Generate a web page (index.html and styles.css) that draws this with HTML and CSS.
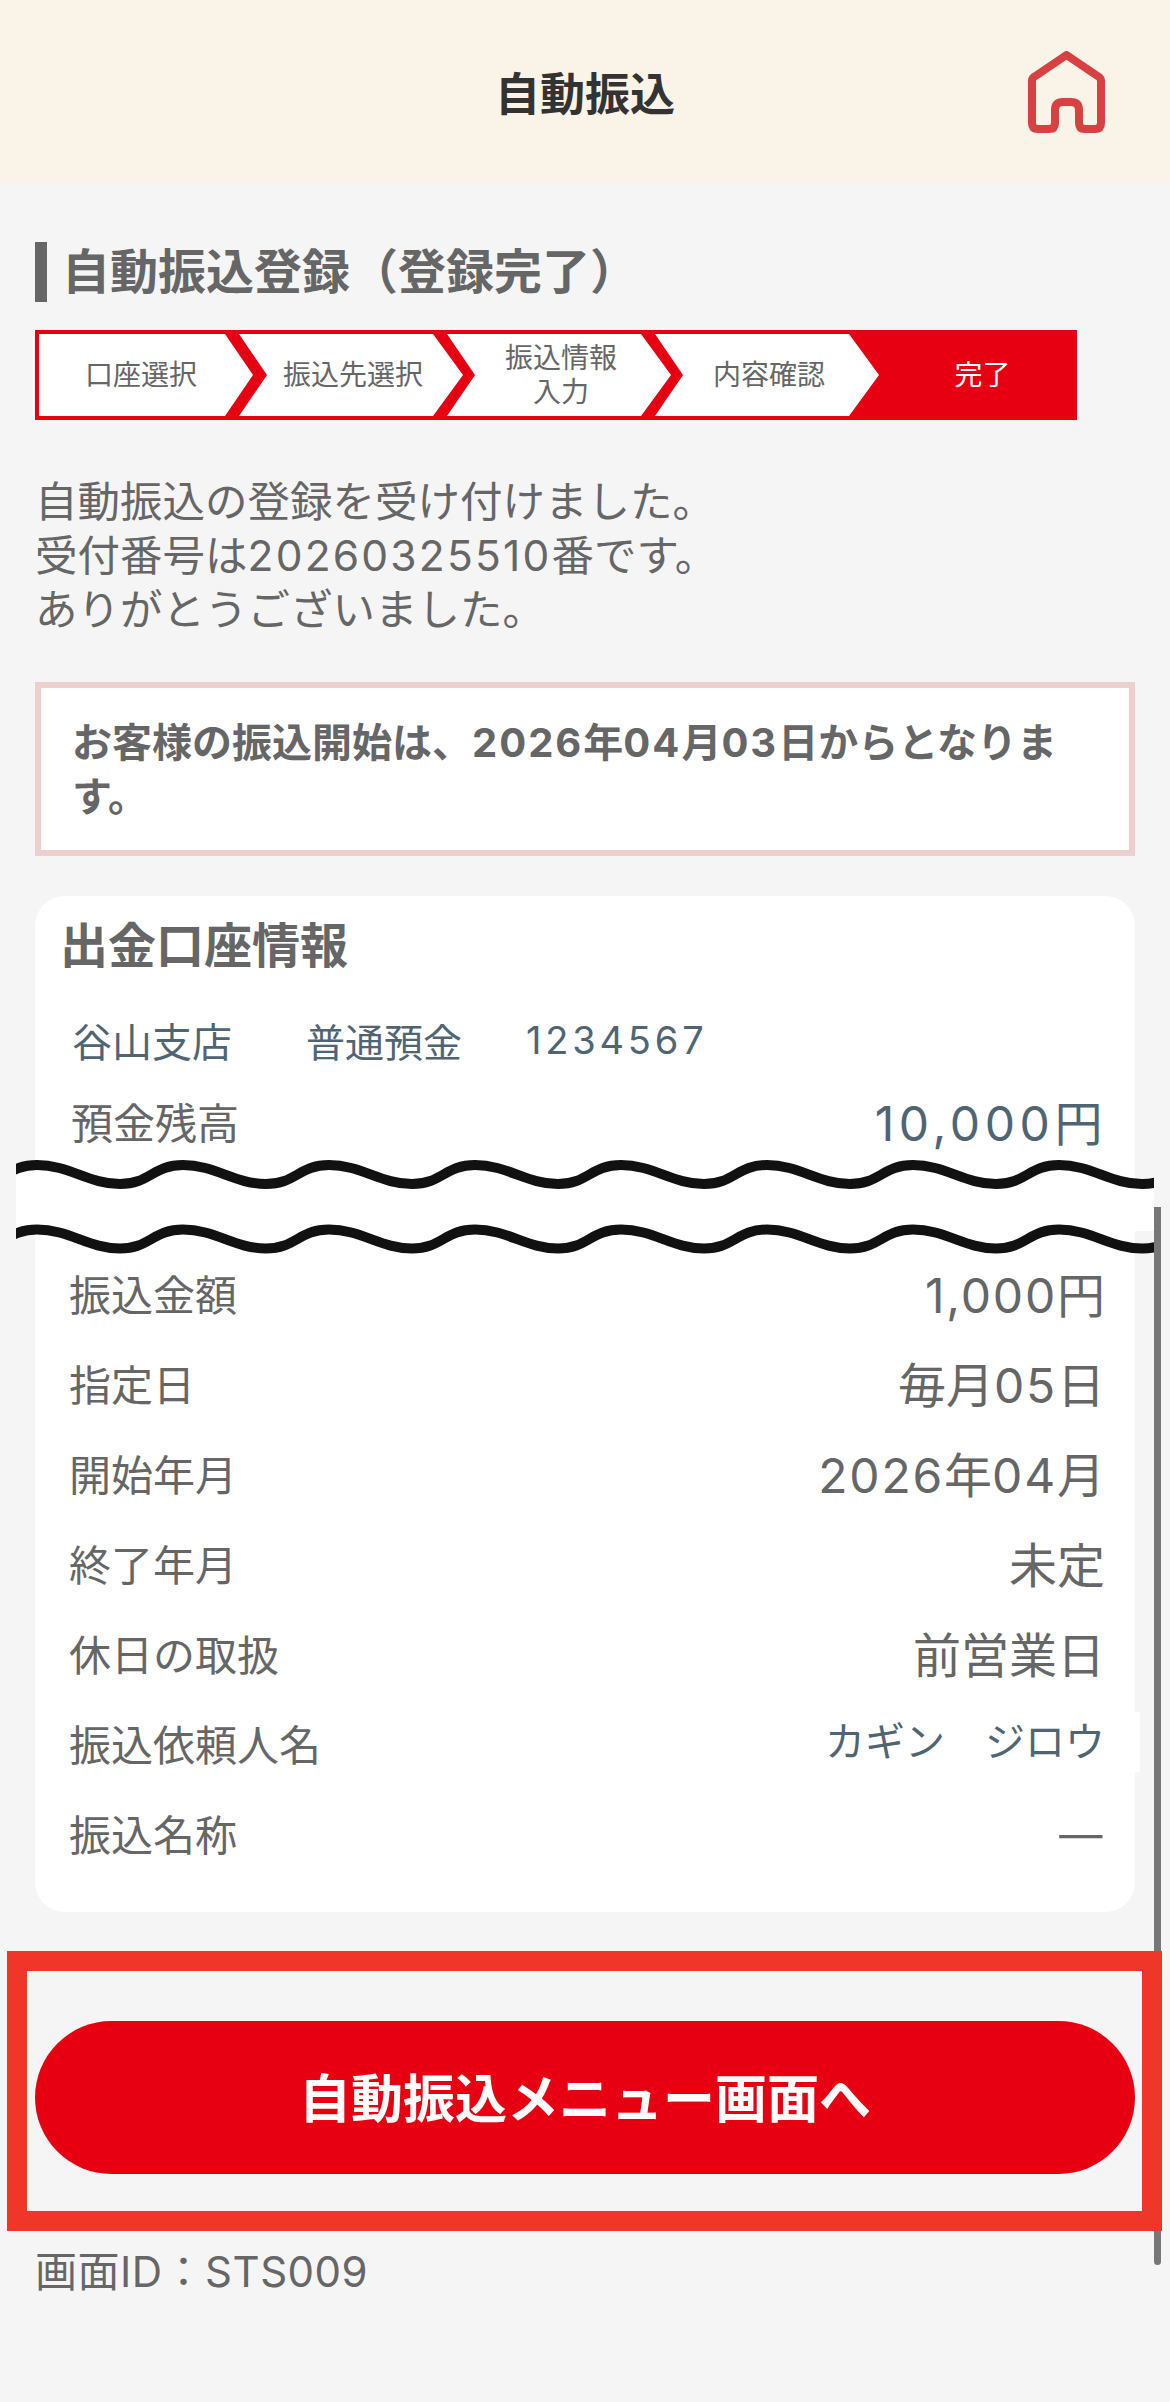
FILE: index.html
```html
<!DOCTYPE html>
<html lang="ja">
<head>
    <meta charset="UTF-8">
    <meta name="viewport" content="width=device-width, initial-scale=1.0">
    <title>自動振込</title>
    <link rel="stylesheet" href="styles.css">
</head>
<body>
    <div class="page">
        <header class="top-bar">
            <h1 class="top-title">自動振込</h1>
            <svg class="home-icon" width="77" height="82" viewBox="0 0 77 82" fill="none" stroke="#d74142" stroke-width="8" stroke-linejoin="round">
                <path d="M38.5 4 L71 26 Q73 27.5 73 30 V72 Q73 78 67 78 H57 Q51 78 51 72 V59 Q51 51 43 51 H35 Q27 51 27 59 V72 Q27 78 21 78 H10 Q4 78 4 72 V30 Q4 27.5 6 26 Z"/>
            </svg>
        </header>

        <main class="content">
            <h2 class="page-heading">自動振込登録（登録完了）</h2>

            <ol class="steps">
                <li class="step step-first">口座選択</li>
                <li class="step">振込先選択</li>
                <li class="step">振込情報<br>入力</li>
                <li class="step">内容確認</li>
                <li class="step step-current">完了</li>
            </ol>

            <p class="message">自動振込の登録を受け付けました。<br>受付番号は<span class="num">20260325510</span>番です。<br>ありがとうございました。</p>

            <div class="notice">お客様の振込開始は、<span class="num">2026</span>年<span class="num">04</span>月<span class="num">03</span>日からとなりま<br>す。</div>

            <section class="card">
                <h3 class="card-title">出金口座情報</h3>
                <div class="account">
                    <span class="branch">谷山支店</span>
                    <span class="account-type">普通預金</span>
                    <span class="account-no">1234567</span>
                </div>
                <div class="row row-balance">
                    <span class="label">預金残高</span>
                    <span class="value value-balance">10,000円</span>
                </div>

                <dl class="details">
                    <div class="row"><dt class="label">振込金額</dt><dd class="value"><span class="num">1,000</span>円</dd></div>
                    <div class="row"><dt class="label">指定日</dt><dd class="value">毎月<span class="num">05</span>日</dd></div>
                    <div class="row"><dt class="label">開始年月</dt><dd class="value"><span class="num">2026</span>年<span class="num">04</span>月</dd></div>
                    <div class="row"><dt class="label">終了年月</dt><dd class="value">未定</dd></div>
                    <div class="row"><dt class="label">休日の取扱</dt><dd class="value">前営業日</dd></div>
                    <div class="row"><dt class="label">振込依頼人名</dt><dd class="value value-name">カギン　ジロウ</dd></div>
                    <div class="row"><dt class="label">振込名称</dt><dd class="value value-dash">—</dd></div>
                </dl>
            </section>

            <button class="menu-button" type="button">自動振込メニュー画面へ</button>

            <p class="screen-id">画面ID：STS009</p>
        </main>

        <!-- annotations laid over the screenshot -->
        <div class="scrollbar"></div>
        <svg class="page-break" width="1138" height="100" viewBox="0 0 1138 100" fill="none" stroke="#111">
            <path class="break-fill" d="M-125 5 c32 0 52 19 83 19 c30 0 33 -19 63 -19 c32 0 52 19 83 19 c30 0 33 -19 63 -19 c32 0 52 19 83 19 c30 0 33 -19 63 -19 c32 0 52 19 83 19 c30 0 33 -19 63 -19 c32 0 52 19 83 19 c30 0 33 -19 63 -19 c32 0 52 19 83 19 c30 0 33 -19 63 -19 c32 0 52 19 83 19 c30 0 33 -19 63 -19 c32 0 52 19 83 19 c30 0 33 -19 63 -19 c32 0 52 19 83 19 c30 0 33 -19 63 -19 V71 H-125 Z"/>
            <path id="wave" stroke-width="10" d="M-125 5 c32 0 52 19 83 19 c30 0 33 -19 63 -19 c32 0 52 19 83 19 c30 0 33 -19 63 -19 c32 0 52 19 83 19 c30 0 33 -19 63 -19 c32 0 52 19 83 19 c30 0 33 -19 63 -19 c32 0 52 19 83 19 c30 0 33 -19 63 -19 c32 0 52 19 83 19 c30 0 33 -19 63 -19 c32 0 52 19 83 19 c30 0 33 -19 63 -19 c32 0 52 19 83 19 c30 0 33 -19 63 -19 c32 0 52 19 83 19 c30 0 33 -19 63 -19"/>
            <use href="#wave" y="64.5"/>
        </svg>
        <div class="highlight"></div>
    </div>
</body>
</html>
```

FILE: styles.css
```css
* {
    box-sizing: border-box;
}

body {
    margin: 0;
    font-family: Inter, "Noto Sans CJK JP", sans-serif;
    background-color: #f5f5f5;
    color: #666;
}

.page {
    position: relative;
    height: 2402px;
    overflow: hidden;
}

.num {
    letter-spacing: 1.8px;
}

.top-bar {
    display: grid;
    grid-template-columns: 1fr auto 1fr;
    align-items: center;
    height: 183px;
    background-color: #faf3e8;
}

.top-title {
    grid-column: 2;
    margin: 0;
    font-size: 45px;
    font-weight: 700;
    color: #333;
}

.home-icon {
    justify-self: end;
    margin-right: 65px;
}

.content {
    padding: 59px 35px 0;
}

.page-heading {
    margin: 0;
    padding-left: 15px;
    border-left: 12px solid #666;
    font-size: 48px;
    font-weight: 700;
    line-height: 60px;
}

.steps {
    display: flex;
    width: 1042px;
    height: 90px;
    margin: 28px 0 0;
    padding: 0;
    list-style: none;
    border: 4px solid #e60012;
    background-color: #e60012;
}

.step {
    display: flex;
    flex: none;
    align-items: center;
    justify-content: center;
    width: 228px;
    margin-left: -20px;
    background-color: #fff;
    clip-path: polygon(0 0, 194px 0, 224px 50%, 194px 100%, 0 100%, 28px 50%);
    font-size: 28px;
    line-height: 34px;
    text-align: center;
}

.step-first {
    width: 220px;
    margin-left: 0;
    padding-right: 16px;
    clip-path: polygon(0 0, 186px 0, 214px 50%, 186px 100%, 0 100%);
}

.step-current {
    flex: 1;
    width: auto;
    margin-left: 0;
    padding-left: 9px;
    background: none;
    clip-path: none;
    color: #fff;
}

.message {
    margin: 55px 0 0;
    font-size: 42.5px;
    line-height: 54px;
}

.message .num {
    letter-spacing: 2.2px;
}

.notice {
    height: 174px;
    margin-top: 45px;
    padding: 28px 31px;
    border: 6px solid #ecd0d0;
    background-color: #fff;
    font-size: 40px;
    font-weight: 700;
    line-height: 54px;
}

.notice .num {
    letter-spacing: 2px;
}

.card {
    height: 1016px;
    margin-top: 40px;
    padding-top: 20px;
    border-radius: 30px;
    background-color: #fff;
}

.card-title {
    margin: 0;
    padding-left: 25px;
    font-size: 48px;
    font-weight: 700;
    line-height: 60px;
}

.account {
    display: flex;
    align-items: center;
    height: 60px;
    margin-top: 34px;
    padding-left: 37px;
    font-size: 40px;
    color: #4f6573;
}

.account-type {
    margin-left: 74px;
    font-size: 39px;
}

.account-no {
    margin-left: 64px;
    font-size: 38px;
    letter-spacing: 3.8px;
}

.row {
    display: flex;
    align-items: center;
    justify-content: space-between;
    height: 90px;
    padding: 0 30px 0 34px;
}

.row-balance {
    margin-top: 5px;
    padding-left: 36px;
    padding-right: 28px;
}

.label {
    font-size: 42px;
}

.value {
    margin: 0;
    font-size: 48px;
}

.value-balance {
    color: #4f6573;
    letter-spacing: 4.6px;
}

.value-name {
    margin-right: -35px;
    padding-right: 35px;
    background-color: #fff;
    font-size: 40px;
    line-height: 60px;
    color: #4f6573;
}

.value-dash {
    margin-bottom: 6px;
    font-family: "Noto Sans CJK JP", sans-serif;
    font-size: 54px;
    line-height: 1;
}

.details {
    margin: 82px 0 0;
}

.menu-button {
    display: block;
    width: 100%;
    height: 153px;
    margin-top: 109px;
    padding-bottom: 6px;
    border: none;
    border-radius: 77px;
    background-color: #e60012;
    font-family: inherit;
    font-size: 52px;
    font-weight: 700;
    color: #fff;
}

.screen-id {
    margin: 68px 0 0;
    font-size: 42px;
    line-height: 60px;
    letter-spacing: 0.5px;
}

.scrollbar {
    position: absolute;
    top: 1207px;
    left: 1154px;
    width: 7px;
    height: 1058px;
    border-radius: 0 0 4px 4px;
    background-color: #777;
}

.page-break {
    position: absolute;
    top: 1160px;
    left: 16px;
}

.break-fill {
    fill: #fff;
    stroke: none;
}

.highlight {
    position: absolute;
    top: 1951px;
    left: 7px;
    width: 1155px;
    height: 280px;
    border: 20px solid #f03529;
}
```
